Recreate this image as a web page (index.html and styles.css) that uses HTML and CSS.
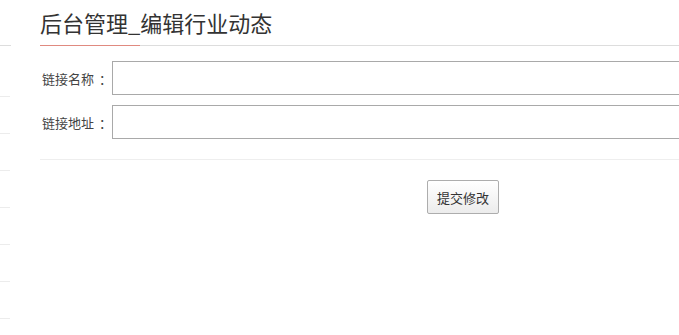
FILE: index.html
```html
<!DOCTYPE html>
<html lang="zh-CN">
<head>
<meta charset="utf-8">
<title>后台管理_编辑行业动态</title>
<link rel="stylesheet" href="styles.css">
</head>
<body>
<div class="page">
  <aside class="sidebar">
    <div class="side-head"></div>
    <ul class="side-list">
      <li></li><li></li><li></li><li></li><li></li><li></li><li></li>
    </ul>
  </aside>
  <main class="main">
    <h2 class="title">后台管理_编辑行业动态</h2>
    <form class="form">
      <div class="row">
        <label class="label">链接名称<span class="colon">：</span></label>
        <input class="field" type="text">
      </div>
      <div class="row">
        <label class="label">链接地址<span class="colon">：</span></label>
        <input class="field" type="text">
      </div>
      <div class="divider"></div>
      <div class="actions">
        <button class="btn" type="button">提交修改</button>
      </div>
    </form>
  </main>
</div>
</body>
</html>
```
FILE: styles.css
```css
html, body {
  margin: 0;
  padding: 0;
  overflow: hidden;
  background: #fff;
}
body {
  font-family: "Noto Sans CJK SC", "Liberation Sans", sans-serif;
  color: #333;
}
.page {
  display: flex;
  align-items: flex-start;
  width: 100%;
}
.sidebar {
  width: 11px;
  flex: 0 0 11px;
}
.side-head {
  height: 45px;
  border-bottom: 1px solid #ddd;
}
.side-list {
  list-style: none;
  margin: 14px 0 0 0;
  padding: 0;
}
.side-list li {
  height: 36px;
  border-bottom: 1px solid #ececec;
  margin-right: 1px;
}
.main {
  margin-left: 29px;
  flex: 1;
  min-width: 0;
}
.title {
  position: relative;
  margin: 0;
  height: 45px;
  line-height: 45px;
  font-size: 22px;
  font-weight: normal;
  color: #333;
  border-bottom: 1px solid #ddd;
  white-space: nowrap;
}
.title::after {
  content: "";
  position: absolute;
  left: 0;
  bottom: -1px;
  width: 100px;
  height: 1px;
  background: #e08a80;
}
.form {
  padding-top: 15px;
}
.row {
  display: flex;
  align-items: center;
  margin-bottom: 10px;
}
.label {
  flex: 0 0 72px;
  padding-left: 2px;
  box-sizing: border-box;
  font-size: 13px;
  color: #444;
  white-space: nowrap;
}
.colon {
  margin-left: 5px;
}
.field {
  flex: 1;
  min-width: 0;
  height: 34px;
  box-sizing: border-box;
  margin: 0;
  border: 1px solid #a9a9a9;
  border-right: 0;
  padding: 0 6px;
  font-family: inherit;
  font-size: 13px;
  outline: none;
}
.divider {
  margin-top: 20px;
  border-top: 1px solid #eee;
}
.actions {
  padding-top: 20px;
  padding-left: 387px;
}
.btn {
  height: 34px;
  width: 72px;
  padding: 0;
  border: 1px solid #adadad;
  border-radius: 2px;
  background: linear-gradient(#ffffff, #ececec);
  font-family: inherit;
  font-size: 13px;
  color: #333;
}
```
